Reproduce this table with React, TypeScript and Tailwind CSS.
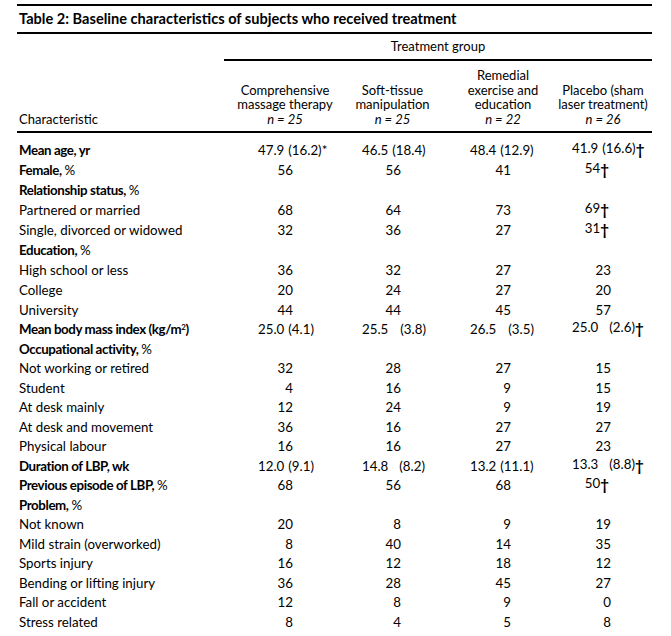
import React from "react";

type Cell =
  | { t: "int"; v: string }
  | { t: "dag"; v: string }
  | { t: "mean"; a: string; b: string; gap: string; dag?: boolean };

type Row = {
  label: React.ReactNode;
  bold?: boolean;
  cells?: Cell[];
};

const I = (v: string): Cell => ({ t: "int", v });
const D = (v: string): Cell => ({ t: "dag", v });
const M = (a: string, b: string, gap: string, dag?: boolean): Cell => ({ t: "mean", a, b, gap, dag });

const pct = <span className="font-normal tracking-normal">%</span>;

const rows: Row[] = [
  { label: "Mean age, yr", bold: true, cells: [M("47.9", "(16.2)*", "ml-[4px]"), M("46.5", "(18.4)", "ml-[4px]"), M("48.4", "(12.9)", "ml-[4px]"), M("41.9", "(16.6)", "ml-[4px]", true)] },
  { label: <>Female, {pct}</>, bold: true, cells: [I("56"), I("56"), I("41"), D("54")] },
  { label: <>Relationship status, {pct}</>, bold: true },
  { label: "Partnered or married", cells: [I("68"), I("64"), I("73"), D("69")] },
  { label: "Single, divorced or widowed", cells: [I("32"), I("36"), I("27"), D("31")] },
  { label: <>Education, {pct}</>, bold: true },
  { label: "High school or less", cells: [I("36"), I("32"), I("27"), I("23")] },
  { label: "College", cells: [I("20"), I("24"), I("27"), I("20")] },
  { label: "University", cells: [I("44"), I("44"), I("45"), I("57")] },
  {
    label: (
      <>
        Mean body mass index (kg/m<sup className="text-[8px]">2</sup>)
      </>
    ),
    bold: true,
    cells: [M("25.0", "(4.1)", "ml-[4px]"), M("25.5", "(3.8)", "ml-[12px]"), M("26.5", "(3.5)", "ml-[12px]"), M("25.0", "(2.6)", "ml-[11px]", true)],
  },
  { label: <>Occupational activity, {pct}</>, bold: true },
  { label: "Not working or retired", cells: [I("32"), I("28"), I("27"), I("15")] },
  { label: "Student", cells: [I("4"), I("16"), I("9"), I("15")] },
  { label: "At desk mainly", cells: [I("12"), I("24"), I("9"), I("19")] },
  { label: "At desk and movement", cells: [I("36"), I("16"), I("27"), I("27")] },
  { label: "Physical labour", cells: [I("16"), I("16"), I("27"), I("23")] },
  { label: "Duration of LBP, wk", bold: true, cells: [M("12.0", "(9.1)", "ml-[4px]"), M("14.8", "(8.2)", "ml-[11px]"), M("13.2", "(11.1)", "ml-[4px]"), M("13.3", "(8.8)", "ml-[11px]", true)] },
  { label: <>Previous episode of LBP, {pct}</>, bold: true, cells: [I("68"), I("56"), I("68"), D("50")] },
  { label: <>Problem, {pct}</>, bold: true },
  { label: "Not known", cells: [I("20"), I("8"), I("9"), I("19")] },
  { label: "Mild strain (overworked)", cells: [I("8"), I("40"), I("14"), I("35")] },
  { label: "Sports injury", cells: [I("16"), I("12"), I("18"), I("12")] },
  { label: "Bending or lifting injury", cells: [I("36"), I("28"), I("45"), I("27")] },
  { label: "Fall or accident", cells: [I("12"), I("8"), I("9"), I("0")] },
  { label: "Stress related", cells: [I("8"), I("4"), I("5"), I("8")] },
];

const colW = ["w-[116px]", "w-[105px]", "w-[105px]", "w-[102px]"];
const meanPl = ["pl-[34px]", "pl-[22px]", "pl-[25px]", "pl-[22px]"];
const intPr = ["pr-[47px]", "pr-[44px]", "pr-[39px]", "pr-[41px]"];
const dagPr = ["pr-[47px]", "pr-[44px]", "pr-[39px]", "pr-[43px]"];

function ValueCell({ c, i }: { c: Cell; i: number }) {
  if (c.t === "mean") {
    return (
      <div className={`${colW[i]} ${meanPl[i]} flex items-center whitespace-nowrap ${c.dag ? "-translate-y-[2px]" : ""}`}>
        <span>{c.a}</span>
        <span className={c.gap}>{c.b}</span>
        {c.dag && <span className="font-bold text-[15px]">†</span>}
      </div>
    );
  }
  if (c.t === "dag") {
    return (
      <div className={`${colW[i]} ${dagPr[i]} flex items-center justify-end -translate-y-[2px]`}>
        <span>{c.v}</span>
        <span className="font-bold text-[15px]">†</span>
      </div>
    );
  }
  return <div className={`${colW[i]} ${intPr[i]} flex items-center justify-end`}>{c.v}</div>;
}

export default function App() {
  return (
    <div className="w-[671px] h-[636px] bg-white text-black overflow-hidden" style={{ fontFamily: 'Lato, "Liberation Sans", sans-serif' }}>
      <div className="ml-[17px] w-[635px] pt-[4px]">
        <div className="border-t-2 border-black" />
        <div className="h-[26px] flex items-center pl-[2px] text-[14.6px] font-bold">
          Table 2: Baseline characteristics of subjects who received treatment
        </div>
        <div className="border-t-2 border-black" />
        <div className="flex">
          <div className="w-[207px]" />
          <div className="flex-1">
            <div className="h-[25px] flex items-center justify-center text-[13px]">Treatment group</div>
            <div className="border-t-2 border-black" />
          </div>
        </div>
        <div className="flex h-[70px] items-end pb-[5px] text-[13px] leading-[14.5px] text-center">
          <div className="w-[207px] pl-[2px] text-left">Characteristic</div>
          <div className="w-[116px] pl-[6px] whitespace-nowrap">
            Comprehensive
            <br />
            massage therapy
            <br />
            <i>n = 25</i>
          </div>
          <div className="w-[105px] whitespace-nowrap">
            Soft-tissue
            <br />
            manipulation
            <br />
            <i>n = 25</i>
          </div>
          <div className="w-[105px] pl-[11px] whitespace-nowrap">
            Remedial
            <br />
            exercise and
            <br />
            education
            <br />
            <i>n = 22</i>
          </div>
          <div className="w-[102px] pl-[4px] whitespace-nowrap">
            Placebo (sham
            <br />
            laser treatment)
            <br />
            <i>n = 26</i>
          </div>
        </div>
        <div className="border-t-2 border-black" />
        <div className="pt-[8px] text-[13.3px]">
          {rows.map((r, idx) => (
            <div key={idx} className={`flex items-center ${idx < 8 ? "h-[20px]" : "h-[19.5px]"}`}>
              <div className={`w-[207px] pl-[2px] whitespace-nowrap ${r.bold ? "font-bold tracking-[-0.4px]" : ""}`}>{r.label}</div>
              {r.cells && r.cells.map((c, i) => <ValueCell key={i} c={c} i={i} />)}
            </div>
          ))}
        </div>
      </div>
    </div>
  );
}
